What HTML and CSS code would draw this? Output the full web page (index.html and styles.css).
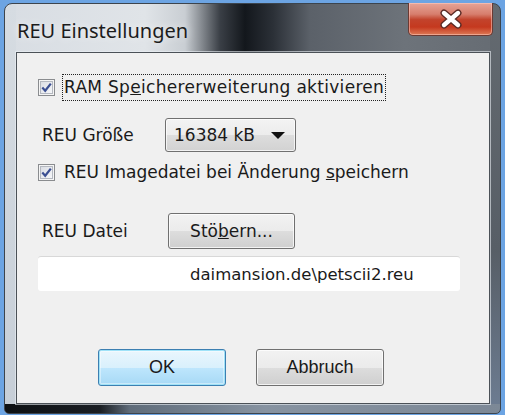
FILE: index.html
```html
<!DOCTYPE html>
<html>
<head>
<meta charset="utf-8">
<link rel="stylesheet" href="styles.css">
</head>
<body>
<div class="window">
  <div class="titlebar">
    <span class="title">REU Einstellungen</span>
    <div class="close">
      <svg width="26" height="20" viewBox="0 0 26 20"><path d="M6 4 L20 16 M20 4 L6 16" stroke="#5a2a24" stroke-width="7" stroke-linecap="round"/><path d="M6 4 L20 16 M20 4 L6 16" stroke="#ffffff" stroke-width="4.4" stroke-linecap="round"/></svg>
    </div>
  </div>
  <div class="client">
    <div class="row row-ram">
      <span class="cb"><svg width="17" height="17" viewBox="0 0 17 17"><defs><linearGradient id="g1" x1="0" y1="0" x2="1" y2="1"><stop offset="0" stop-color="#d9dce3"/><stop offset="1" stop-color="#f7f8fa"/></linearGradient></defs><rect x="0.5" y="0.5" width="16" height="16" fill="#f5f5f5" stroke="#8a8c8f"/><rect x="2.5" y="2.5" width="12" height="12" fill="url(#g1)" stroke="#b4b8c0"/><path d="M4.3 8.6 L7.2 11.8 L12.8 4.6" fill="none" stroke="#3b4f92" stroke-width="2.2"/></svg></span>
      <span class="label focus">RAM Sp<u>e</u>ichererweiterung aktivieren</span>
    </div>
    <div class="row row-size">
      <span class="field-label">REU Größe</span>
      <div class="combo"><span>16384 kB</span><span class="arrow"></span></div>
    </div>
    <div class="row row-save">
      <span class="cb"><svg width="17" height="17" viewBox="0 0 17 17"><defs><linearGradient id="g2" x1="0" y1="0" x2="1" y2="1"><stop offset="0" stop-color="#d9dce3"/><stop offset="1" stop-color="#f7f8fa"/></linearGradient></defs><rect x="0.5" y="0.5" width="16" height="16" fill="#f5f5f5" stroke="#8a8c8f"/><rect x="2.5" y="2.5" width="12" height="12" fill="url(#g2)" stroke="#b4b8c0"/><path d="M4.3 8.6 L7.2 11.8 L12.8 4.6" fill="none" stroke="#3b4f92" stroke-width="2.2"/></svg></span>
      <span class="label">REU Imagedatei bei Änderung <u>s</u>peichern</span>
    </div>
    <div class="row row-file">
      <span class="field-label">REU Datei</span>
      <div class="btn browse">Stö<u>b</u>ern...</div>
    </div>
    <div class="textfield"><span class="path">daimansion.de\petscii2.reu</span></div>
    <div class="buttons">
      <div class="btn dlg default">OK</div>
      <div class="btn dlg">Abbruch</div>
    </div>
  </div>
</div>
</body>
</html>
```

FILE: styles.css
```css
html, body {
  margin: 0;
  padding: 0;
}
body {
  width: 505px;
  height: 415px;
  overflow: hidden;
  background: #6ca4e3;
  font-family: "DejaVu Sans", sans-serif;
  color: #1a1a1a;
}
.window {
  box-sizing: border-box;
  margin: 3px 4px 0 4px;
  height: 411px;
  border: 1px solid #3c444d;
  border-radius: 8px 8px 5px 5px;
  padding: 0 10px 9px 11px;
  display: flex;
  flex-direction: column;
  background:
    linear-gradient(to right, #0d1013 0, #1a1e23 95px, #5f6c7a 125px, #8793a1 260px, #7c8896 100%) left bottom / 100% 9px no-repeat,
    linear-gradient(to bottom, #d6dce2 0, #c6ced7 100%) left top / 11px 100% no-repeat,
    linear-gradient(to bottom, #646a70 0, #575e66 60%, #6d7d93 100%) right top / 10px 100% no-repeat,
    linear-gradient(to right, #d8dde3 0, #e0e4e8 140px, #c9ced3 180px, #3a3f46 215px, #13171c 240px, #2b3037 268px, #5b6169 305px, #6d737a 400px, #666c73 100%);
}
.titlebar {
  height: 48px;
  margin: 0 -10px 0 -11px;
  display: flex;
  align-items: flex-start;
}
.title {
  font-family: "Noto Sans", sans-serif;
  font-size: 20px;
  color: #1c1c1c;
  padding: 13px 0 0 12px;
  text-shadow: 0 0 8px rgba(255,255,255,0.8);
}
.close {
  margin-left: auto;
  margin-right: 7px;
  margin-top: -1px;
  width: 85px;
  height: 33px;
  box-sizing: border-box;
  border: 1px solid #6b3a33;
  border-top: none;
  border-radius: 0 0 5px 5px;
  background: linear-gradient(to bottom, #e6a497 0, #d77e6d 35%, #c2432c 52%, #c5391f 75%, #dd7a56 100%);
  box-shadow: inset 0 0 0 1px rgba(255,210,200,0.5);
  display: flex;
  align-items: center;
  justify-content: center;
}
.client {
  flex: 1;
  background: #f0f0f0;
  border: 1px solid #4b5157;
  box-shadow: 0 0 0 1px rgba(235,240,245,0.6);
  padding: 21px 0 0 21px;
  font-size: 17px;
  display: flex;
  flex-direction: column;
}
.row {
  display: flex;
  align-items: center;
}
.cb {
  width: 17px;
  height: 17px;
  display: flex;
}
.label {
  margin-left: 8px;
  padding: 2px 1px;
  line-height: 21px;
}
.focus {
  outline: 1px dotted #222;
  letter-spacing: 0.3px;
}
.row-ram {
  height: 26px;
}
.row-size {
  margin-top: 18px;
  height: 34px;
}
.field-label {
  width: 127px;
  padding-left: 4px;
  box-sizing: border-box;
}
.combo {
  box-sizing: border-box;
  width: 131px;
  height: 34px;
  border: 1px solid #707070;
  border-radius: 3px;
  background: linear-gradient(to bottom, #f3f3f3 0, #ececec 50%, #dddddd 51%, #d2d2d2 100%);
  box-shadow: inset 0 0 0 1px rgba(255,255,255,0.7);
  display: flex;
  align-items: center;
  padding: 0 10px 0 8px;
}
.arrow {
  margin-left: auto;
  width: 0;
  height: 0;
  border-left: 7px solid transparent;
  border-right: 7px solid transparent;
  border-top: 7px solid #111;
}
.row-save {
  margin-top: 8px;
  height: 25px;
}
.row-file {
  margin-top: 28px;
  height: 36px;
}
.row-file .field-label {
  width: 130px;
}
.btn {
  box-sizing: border-box;
  border: 1px solid #707070;
  border-radius: 3px;
  background: linear-gradient(to bottom, #f2f2f2 0, #ebebeb 50%, #dddddd 51%, #cfcfcf 100%);
  box-shadow: inset 0 0 0 1px rgba(255,255,255,0.75);
  display: flex;
  align-items: center;
  justify-content: center;
}
.browse {
  width: 127px;
  height: 36px;
}
.textfield {
  margin-top: 7px;
  width: 422px;
  height: 35px;
  box-sizing: border-box;
  background: #fff;
  border-top: 1px solid #d8d8d8;
  border-radius: 3px;
  display: flex;
  align-items: center;
  padding-left: 152px;
}
.path {
  white-space: nowrap;
  font-size: 16.5px;
}
.buttons {
  margin-top: 58px;
  padding-left: 60px;
  display: flex;
  gap: 30px;
}
.dlg {
  width: 128px;
  height: 37px;
  font-family: "Liberation Sans", sans-serif;
  font-size: 18px;
}
.default {
  border-color: #3c7fb1;
  background: linear-gradient(to bottom, #eaf6fd 0, #d9f0fc 50%, #bee6fd 51%, #a7d9f5 100%);
  box-shadow: inset 0 0 0 1px #9fe2f8, inset 0 0 0 2px rgba(255,255,255,0.4);
}
```
